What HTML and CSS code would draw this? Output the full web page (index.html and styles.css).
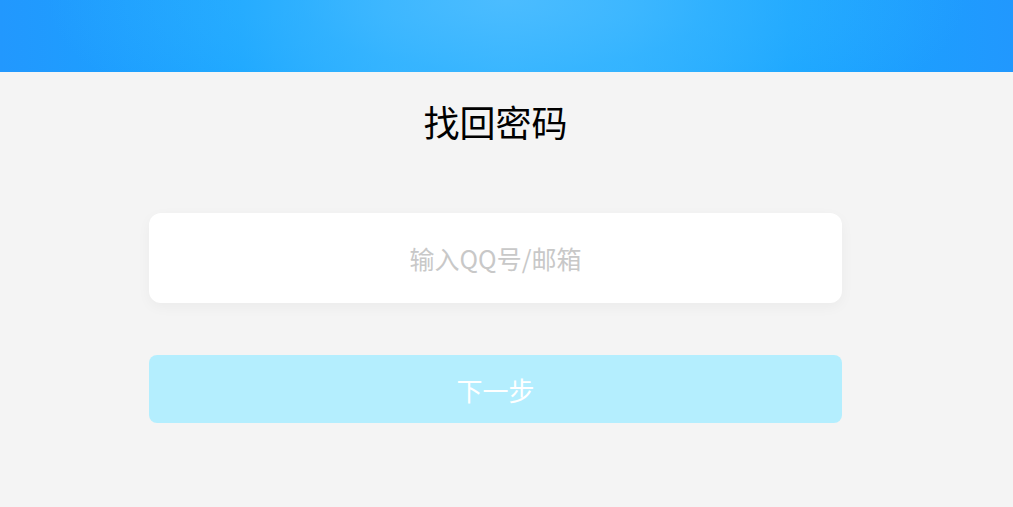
FILE: index.html
```html
<!DOCTYPE html>
<html lang="zh-CN">
<head>
<meta charset="utf-8">
<title>找回密码</title>
<link rel="stylesheet" href="styles.css">
</head>
<body>
<header class="topbar"></header>
<main class="content">
  <h1 class="title">找回密码</h1>
  <form class="form">
    <div class="field">
      <input class="field-input" type="text" placeholder="输入QQ号/邮箱">
    </div>
    <button class="next-btn" type="button">下一步</button>
  </form>
</main>
</body>
</html>
```

FILE: styles.css
```css
html, body {
  margin: 0;
  padding: 0;
}
body {
  background: #f4f4f4;
  font-family: "Noto Sans CJK SC", "Noto Sans", sans-serif;
  height: 507px;
  overflow: hidden;
}
.topbar {
  height: 72px;
  background:
    radial-gradient(ellipse 460px 160px at 50% 0%, rgba(80, 190, 255, 0.8) 0%, rgba(60, 183, 255, 0.5) 45%, rgba(40, 175, 255, 0) 100%),
    linear-gradient(90deg, #2298fe 0%, #18a5ff 24%, #2eb1ff 38%, #38b5ff 50%, #2eb1ff 62%, #18a5ff 78%, #2198fe 100%);
}
.content {
  width: 991px;
  display: flex;
  flex-direction: column;
  align-items: center;
}
.title {
  margin: 25px 0 0;
  font-size: 36px;
  line-height: 48px;
  font-weight: 400;
  color: #000;
}
.form {
  width: 693px;
  margin-top: 68px;
  display: flex;
  flex-direction: column;
  gap: 52px;
}
.field {
  height: 90px;
  background: #fff;
  border-radius: 12px;
  box-shadow: 0 4px 14px rgba(0, 0, 0, 0.04);
  display: flex;
}
.field-input {
  flex: 1;
  border: none;
  outline: none;
  background: transparent;
  text-align: center;
  font-family: "Noto Sans CJK SC", "Noto Sans", sans-serif;
  font-size: 25px;
  color: #333;
  padding: 0;
}
.field-input::placeholder {
  color: #c8c8c8;
}
.next-btn {
  height: 68px;
  border: none;
  border-radius: 8px;
  background: #b4eefe;
  color: #fff;
  font-family: "Noto Sans CJK SC", "Noto Sans", sans-serif;
  font-size: 26px;
  padding: 0;
}
```
